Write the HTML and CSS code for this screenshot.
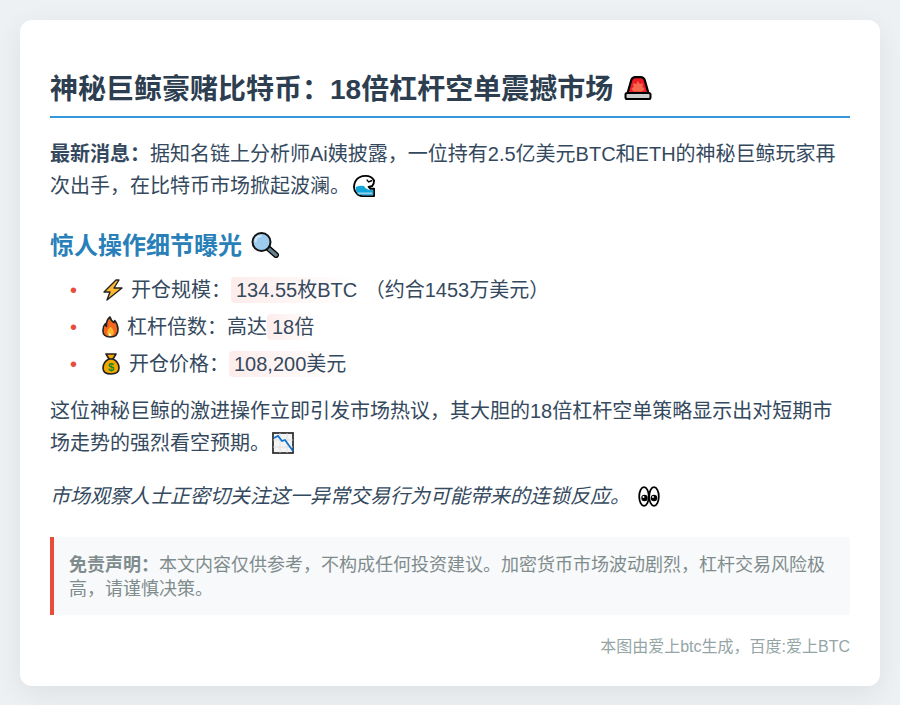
FILE: index.html
```html
<!DOCTYPE html>
<html lang="zh-CN">
<head>
<meta charset="utf-8">
<title>神秘巨鲸豪赌比特币</title>
<link rel="stylesheet" href="styles.css">
</head>
<body>
<main class="card">
  <h1 class="title">神秘巨鲸豪赌比特币：18倍杠杆空单震撼市场<svg class="emoji emoji-title" viewBox="0 0 28 24"><path d="M2 22.500 7 5Q8 1.200 11.500 1.200h5Q20 1.200 21 5l5 17.500z" fill="#ed1c24" stroke="#000" stroke-width="2.200" stroke-linejoin="round"/><path d="m14 5 1.700 3 3.300-.7-.7 3.400 2.400 2.300-2.400 2.500H9.700l-2.400-2.500 2.400-2.300-.7-3.400 3.300.7z" fill="#f4694f"/><rect x="1.500" y="17" width="25" height="6" rx="1.800" fill="#ccc" stroke="#000" stroke-width="2"/></svg></h1>
  <p class="para"><strong>最新消息：</strong>据知名链上分析师Ai姨披露，一位持有2.5亿美元BTC和ETH的神秘巨鲸玩家再次出手，在比特币市场掀起波澜。<svg class="emoji emoji-wave" viewBox="0 0 24 24"><path d="M23 6q-3-5-9-5Q6 1 2.500 7-1 15 4 20q2 3 6 3h13v-8h-4l-2-2 4-1q2-2 2-6z" fill="#fff" stroke="#000" stroke-width="2" stroke-linejoin="round"/><path d="M3 13q5-2 9-1 1 3 5 4h5v6H10q-7 0-7-9z" fill="#12a5d8"/><path d="M5 20h16" stroke="#8fd3ea" stroke-width="2"/><path d="m15 5 2 2.500L21 6" fill="none" stroke="#000" stroke-width="1.600"/></svg></p>
  <h2 class="subtitle">惊人操作细节曝光<svg class="emoji emoji-sub" viewBox="0 0 28 26"><path d="m17 16 8 7" stroke="#000" stroke-width="6" stroke-linecap="round"/><path d="m18 17 7 6" stroke="#64808c" stroke-width="3.400" stroke-linecap="round"/><circle cx="10.500" cy="10" r="9" fill="#9ccbee" stroke="#111" stroke-width="2"/><path d="M4.500 10q0-6 6-6" fill="none" stroke="#cfe6f7" stroke-width="2"/></svg></h2>
  <ul class="facts">
    <li class="fact"><svg class="emoji emoji-bolt" viewBox="0 0 22 22"><path d="M14 1 2 13h6L5 21l15-12h-8l5-8z" fill="#fdb833" stroke="#222" stroke-width="1.400" stroke-linejoin="round"/></svg>开仓规模：<span class="mark">134.55枚BTC</span> （约合1453万美元）</li>
    <li class="fact"><svg class="emoji emoji-fire" viewBox="0 0 17 22"><path d="M8 1q1 4 4 5.500.7-1 .7-2 3.300 4 3.300 9 0 7.500-7.700 7.500T1 14q0-4 2.500-6.500 0 2 1 3Q4 4 8 1z" fill="#f4661e" stroke="#222" stroke-width="1.600" stroke-linejoin="round"/><path d="M8.500 10.500q-4 4-3.200 7 1 2.500 3.200 2.500t3.200-2.500q.8-3-3.200-7z" fill="#fbb62c"/><path d="M6.500 18.500q1-2 2-1 1 1 .5 2.500H7.500z" fill="#fff6c8"/></svg>杠杆倍数：高达<span class="mark">18倍</span></li>
    <li class="fact"><svg class="emoji emoji-bag" viewBox="0 0 18 22"><path d="M4 1h10l-3 5q6 3 6 9 0 6-8 6t-8-6q0-6 6-9z" fill="#f5a800" stroke="#222" stroke-width="1.600" stroke-linejoin="round"/><path d="M6 6h6" stroke="#222" stroke-width="1.600"/><text class="dollar" x="9" y="18">$</text></svg>开仓价格：<span class="mark">108,200美元</span></li>
  </ul>
  <p class="para">这位神秘巨鲸的激进操作立即引发市场热议，其大胆的18倍杠杆空单策略显示出对短期市场走势的强烈看空预期。<svg class="emoji emoji-chart" viewBox="0 0 22 22"><rect x="1" y="1" width="20" height="20" fill="#f4f4f4" stroke="#333" stroke-width="1.800"/><path d="M1 8h20M1 15h20M8 1v20M15 1v20" stroke="#ddd" stroke-width=".8"/><path d="M2 6 6 4l4 5 3-1 8 11" fill="none" stroke="#0d74d0" stroke-width="1.800"/></svg></p>
  <p class="para para-note">市场观察人士正密切关注这一异常交易行为可能带来的连锁反应。<svg class="emoji emoji-eyes" viewBox="0 0 22 21"><ellipse cx="6" cy="10.500" rx="4.800" ry="9.300" fill="#fff" stroke="#000" stroke-width="1.800"/><ellipse cx="16" cy="10.500" rx="4.800" ry="9.300" fill="#fff" stroke="#000" stroke-width="1.800"/><circle cx="6.500" cy="12" r="3.200"/><circle cx="16" cy="12" r="3.200"/><circle cx="5.500" cy="11" r="1" fill="#fff"/><circle cx="15" cy="11" r="1" fill="#fff"/></svg></p>
  <aside class="notice"><strong>免责声明：</strong>本文内容仅供参考，不构成任何投资建议。加密货币市场波动剧烈，杠杆交易风险极高，请谨慎决策。</aside>
  <footer class="credit">本图由爱上btc生成，百度:爱上BTC</footer>
</main>
</body>
</html>
```
FILE: styles.css
```css
* {
  box-sizing: border-box;
}

html,
body {
  margin: 0;
  height: 705px;
  overflow: hidden;
}

body {
  background: #eef1f4;
  padding: 20px;
  font-family: "Liberation Sans", "Noto Sans CJK SC", sans-serif;
  font-size: 20px;
  line-height: 32px;
  color: #34495e;
}

.card {
  height: 666px;
  padding: 47px 30px 30px;
  background: #fff;
  border-radius: 12px;
  box-shadow: 0 8px 30px rgba(0, 0, 0, 0.07);
}

.title {
  margin: 0 0 20px;
  padding-bottom: 4px;
  border-bottom: 2px solid #3498db;
  font-size: 28px;
  line-height: 45px;
  font-weight: 700;
  color: #2c3e50;
}

.para {
  margin: 0 0 15px;
}

.subtitle {
  margin: 25px 0 9px;
  font-size: 24px;
  line-height: 38px;
  font-weight: 700;
  color: #2980b9;
}

.facts {
  margin: 0 0 15px;
  padding: 0 0 0 50px;
  list-style: none;
}

.fact {
  position: relative;
  margin-bottom: 5px;
}

.fact::before {
  content: "•";
  position: absolute;
  left: -30px;
  color: #e74c3c;
}

.mark {
  padding: 2px 2px 2px 5px;
  border-radius: 4px;
  background: linear-gradient(to right, rgba(231, 76, 60, 0.1), rgba(231, 76, 60, 0));
}

.para-note {
  margin-top: 21px;
  font-style: italic;
}

.notice {
  margin-top: 25px;
  padding: 16px 15px 14px;
  border-left: 4px solid #e74c3c;
  background: #f8f9fa;
  font-size: 18px;
  line-height: 24px;
  color: #7f8c8d;
}

.credit {
  margin-top: 20px;
  font-size: 16px;
  line-height: 24px;
  text-align: right;
  color: #95a5a6;
}

.emoji-title {
  width: 28px;
  height: 24px;
  margin-left: 11px;
  vertical-align: -1px;
}

.emoji-wave {
  width: 22px;
  height: 22px;
  margin-left: 3px;
  vertical-align: -4px;
}

.emoji-sub {
  width: 28px;
  height: 26px;
  margin-left: 9px;
  vertical-align: -4px;
}

.emoji-bolt {
  width: 22px;
  height: 22px;
  margin: 0 7px 0 2px;
  vertical-align: -4px;
}

.emoji-fire {
  width: 17px;
  height: 22px;
  margin: 0 8px 0 2px;
  vertical-align: -4px;
}

.emoji-bag {
  width: 18px;
  height: 22px;
  margin: 0 9px 0 2px;
  vertical-align: -4px;
}

.dollar {
  font-size: 11px;
  font-weight: 700;
  text-anchor: middle;
  fill: #0b8a2c;
}

.emoji-chart {
  width: 22px;
  height: 22px;
  margin-left: 2px;
  vertical-align: -4px;
}

.emoji-eyes {
  width: 22px;
  height: 21px;
  margin-left: 8px;
  vertical-align: -4px;
}
```
